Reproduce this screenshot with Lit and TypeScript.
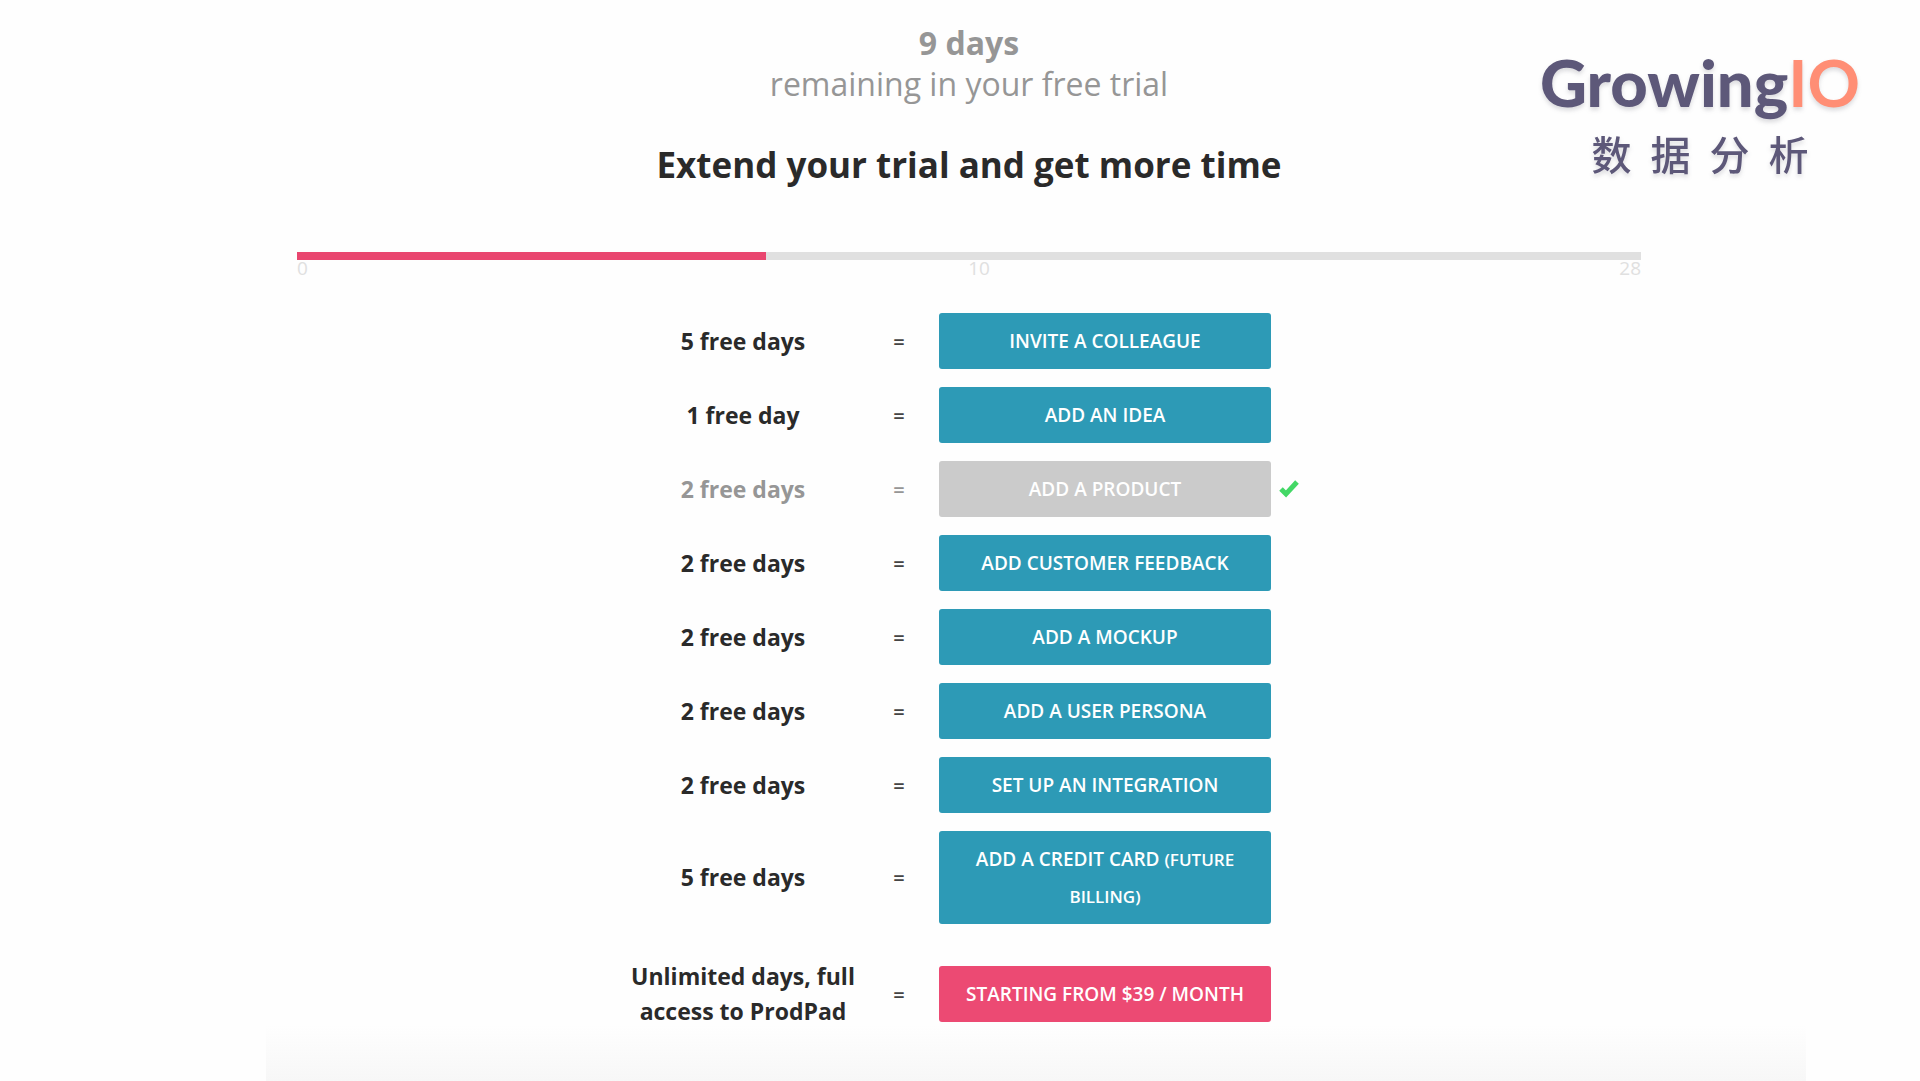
import { LitElement, html, css, svg } from "lit";
import { customElement, property } from "lit/decorators.js";
import { classMap } from "lit/directives/class-map.js";

interface Offer {
  days: string;
  action: string;
  note?: string;
  done?: boolean;
  plan?: boolean;
}

const OFFERS: Offer[] = [
  { days: "5 free days", action: "INVITE A COLLEAGUE" },
  { days: "1 free day", action: "ADD AN IDEA" },
  { days: "2 free days", action: "ADD A PRODUCT", done: true },
  { days: "2 free days", action: "ADD CUSTOMER FEEDBACK" },
  { days: "2 free days", action: "ADD A MOCKUP" },
  { days: "2 free days", action: "ADD A USER PERSONA" },
  { days: "2 free days", action: "SET UP AN INTEGRATION" },
  { days: "5 free days", action: "ADD A CREDIT CARD", note: "(FUTURE BILLING)" },
  { days: "Unlimited days, full access to ProdPad", action: "STARTING FROM $39 / MONTH", plan: true },
];

const check = svg`<path d="M2 9 L7 14 L18 2" fill="none" stroke="#43d866" stroke-width="5"/>`;

@customElement("brand-logo")
export class BrandLogo extends LitElement {
  static styles = css`
    :host {
      display: flex;
      flex-direction: column;
      align-items: center;
      color: #5d5879;
      filter: drop-shadow(0 3px 2px rgba(60, 60, 80, 0.18));
    }
    .word {
      font: 900 65px/72px Lato, sans-serif;
      white-space: nowrap;
    }
    .io {
      color: #ff8e75;
      font-weight: 700;
    }
    .sub {
      display: flex;
      gap: 19px;
      font: 500 40px/70px "Noto Sans CJK SC", sans-serif;
    }
  `;

  render() {
    return html`
      <div class="word">Growing<span class="io">IO</span></div>
      <div class="sub">${[..."数据分析"].map((c) => html`<span>${c}</span>`)}</div>
    `;
  }
}

@customElement("trial-progress")
export class TrialProgress extends LitElement {
  @property({ type: Number }) percent = 0;

  static styles = css`
    :host {
      display: block;
    }
    .track {
      height: 8px;
      background: #e0e0e0;
    }
    .fill {
      height: 100%;
      background: #e9466f;
    }
    .scale {
      display: grid;
      grid-template-columns: 1fr auto 1fr;
      font-size: 19px;
      line-height: 16px;
      color: #e0e0e0;
    }
    .mid {
      padding-left: 20px;
    }
    .end {
      text-align: right;
    }
  `;

  render() {
    return html`
      <div class="track"><div class="fill" style="width:${this.percent}%"></div></div>
      <div class="scale"><span>0</span><span class="mid">10</span><span class="end">28</span></div>
    `;
  }
}

@customElement("app-root")
export class AppRoot extends LitElement {
  static styles = css`
    :host {
      display: block;
      position: relative;
      min-height: 100vh;
      background: #fefefe;
      color: #2a2a2a;
      font-family: "Open Sans", "Noto Sans", sans-serif;
    }
    .logo {
      position: absolute;
      top: 46px;
      right: 60px;
    }
    .panel {
      box-sizing: border-box;
      min-height: 100vh;
      margin: 0 114px 0 266px;
      padding: 22px 165px 0 31px;
      background: linear-gradient(to top, #f7f7f7, #fefefe 56px);
    }
    .left {
      margin: 0;
      text-align: center;
      font-size: 32px;
      line-height: 41px;
      color: #969696;
    }
    .left strong {
      display: block;
    }
    h1 {
      margin: 36px 0 62px;
      text-align: center;
      font-size: 35px;
      line-height: 50px;
      font-weight: 700;
    }
    .offers {
      list-style: none;
      margin: 37px 0 0;
      padding: 0;
      display: flex;
      flex-direction: column;
      gap: 18px;
    }
    .offer {
      display: grid;
      grid-template-columns: 232px 28px 372px;
      column-gap: 26px;
      justify-content: center;
      align-items: center;
      font-size: 23px;
      line-height: 35px;
    }
    .offer.plan {
      margin-top: 17px;
    }
    .days {
      text-align: center;
      font-weight: 700;
    }
    .eq {
      text-align: center;
      font-size: 20px;
      font-weight: 600;
      color: #444;
    }
    .done .days,
    .done .eq {
      color: #969696;
    }
    .action {
      display: flex;
      align-items: center;
      gap: 8px;
    }
    button {
      width: 332px;
      min-height: 56px;
      padding: 10px 20px 9px;
      border: 0;
      border-radius: 3px;
      background: #2d9ab6;
      color: #fff;
      font-family: inherit;
      font-size: 19px;
      line-height: 37px;
      font-weight: 600;
      cursor: pointer;
    }
    .done button {
      background: #cbcbcb;
      cursor: default;
    }
    .plan button {
      background: #ec4a73;
    }
    small {
      font-size: 17px;
    }
    .check {
      width: 20px;
      height: 18px;
    }
  `;

  private row(o: Offer) {
    const note = o.note?.split(" ").map((word) => html` <small>${word}</small>`) ?? "";
    return html`
      <li class=${classMap({ offer: true, done: !!o.done, plan: !!o.plan })}>
        <span class="days">${o.days}</span>
        <span class="eq">=</span>
        <div class="action">
          <button type="button" ?disabled=${!!o.done}>${o.action}${note}</button>
          ${o.done ? html`<svg class="check" viewBox="0 0 20 18" aria-hidden="true">${check}</svg>` : ""}
        </div>
      </li>
    `;
  }

  render() {
    return html`
      <main class="panel">
        <p class="left"><strong>9 days</strong>remaining in your free trial</p>
        <h1>Extend your trial and get more time</h1>
        <trial-progress .percent=${34.9}></trial-progress>
        <ul class="offers">${OFFERS.map((o) => this.row(o))}</ul>
      </main>
      <brand-logo class="logo"></brand-logo>
    `;
  }
}
